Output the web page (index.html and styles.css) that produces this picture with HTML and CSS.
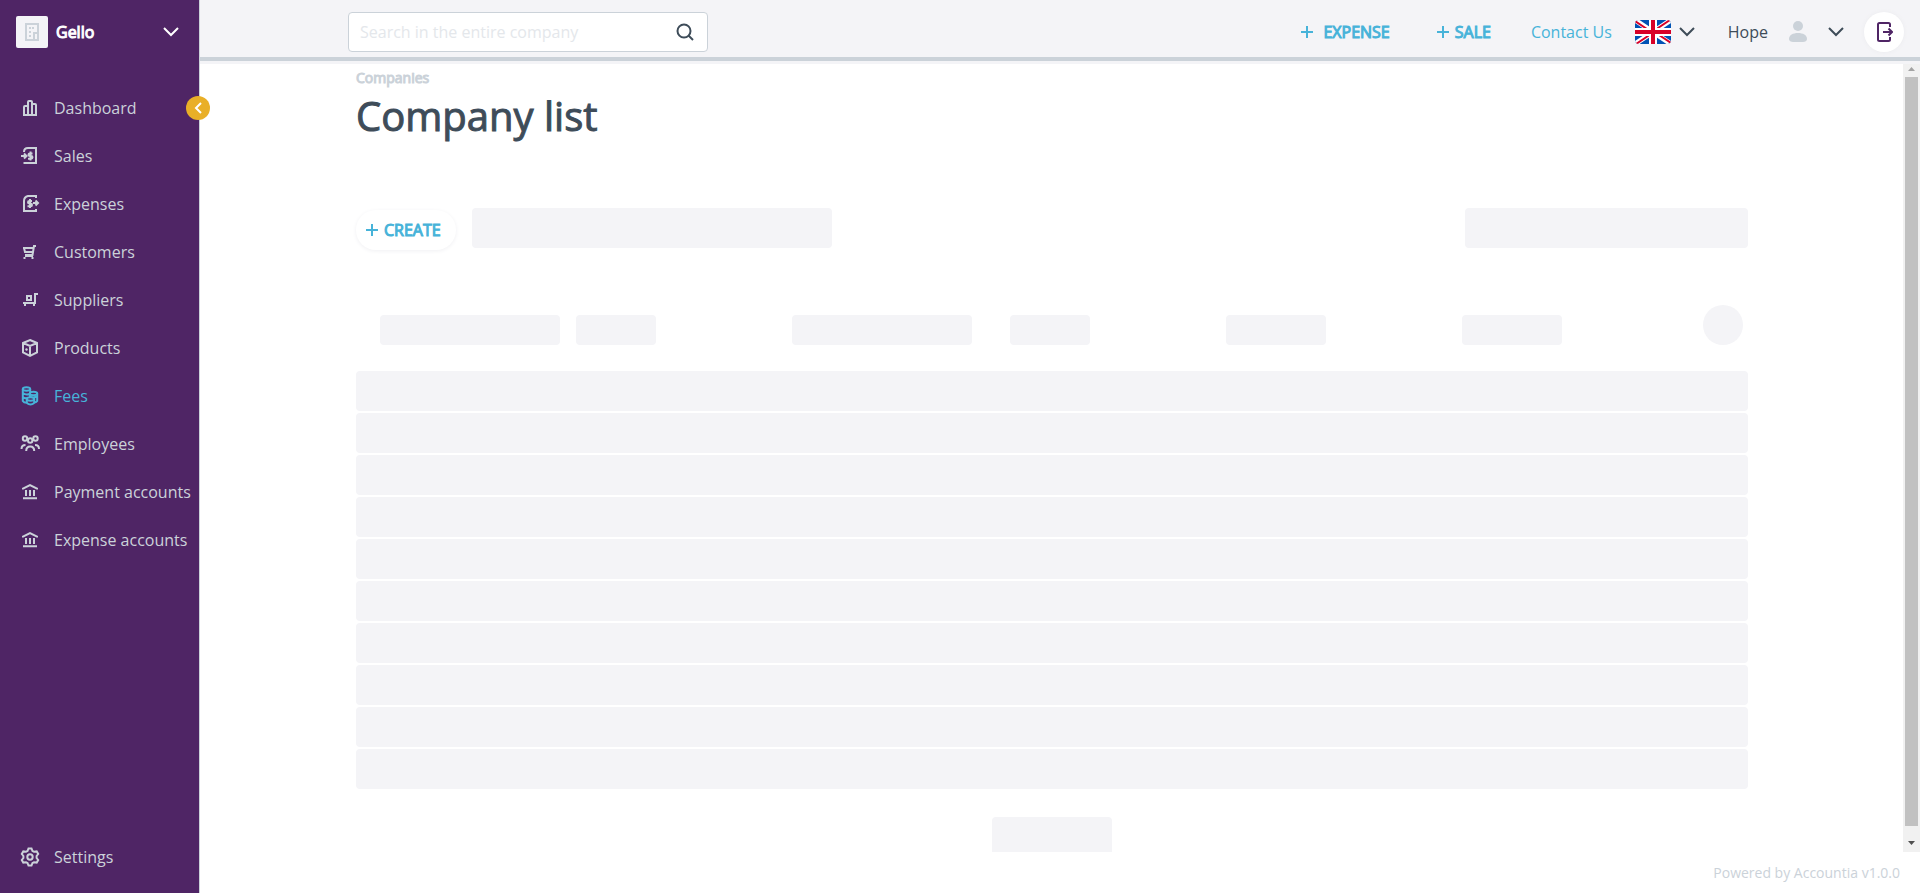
FILE: index.html
```html
<!DOCTYPE html>
<html lang="en">
<head>
<meta charset="utf-8">
<title>Company list</title>
<meta name="viewport" content="width=device-width, initial-scale=1">
<link rel="stylesheet" href="styles.css">
</head>
<body class="app">
<aside class="sidebar">
  <button class="company" type="button">
    <span class="company-logo"><svg width="18" height="20" viewBox="0 0 18 20"><path d="M3 2h12v16H3zM11 18v-7h4"/><path d="M6 6h2M9 6h2M6 10h2M6 14h2"/></svg></span>
    <span class="company-name">Gello</span>
    <svg class="chevron" width="16" height="10" viewBox="0 0 16 10"><path d="M1 1l7 7 7-7"/></svg>
  </button>
  <nav class="menu" aria-label="Main">
    <a class="menu-item" href="#"><svg class="icon" viewBox="0 0 20 20"><path d="M4 17V9q0-1 1-1h3M8 17V4q0-1 1-1h2q1 0 1 1v13M12 6h3q1 0 1 1v10M3 17h14"/></svg>Dashboard</a>
    <a class="menu-item" href="#"><svg class="icon" viewBox="0 0 20 20"><path d="M4 6q0-4 4-4h8v15H3.500M1 10h5M4 7.500L6.500 10 4 12.500"/><path d="M12.500 7.500H10q-1.500 0-1.500 1.300T10 10h1q1.500 0 1.500 1.300T11 12.700H8M10.500 5.500v9"/></svg>Sales</a>
    <a class="menu-item" href="#"><svg class="icon" viewBox="0 0 20 20"><path d="M16 4V2H8Q4 3 4 7v10h12v-2M13 9h5M15.500 6.500L18 9l-2.500 2.500"/><path d="M12 7H9.500Q8 7 8 8.300t1.500 1.300h1q1.500 0 1.500 1.300t-1.500 1.300H7.500M10 5v9"/></svg>Expenses</a>
    <a class="menu-item" href="#"><svg class="icon" viewBox="0 0 20 20"><path d="M16 4h-2l-1.500 9H5M3 6h10M4 6l1 4h8"/><path d="M4.500 15v2M12.500 15v2M5 14h8"/></svg>Customers</a>
    <a class="menu-item" href="#"><svg class="icon" viewBox="0 0 20 20"><path d="M18 4h-3v9H3M7 6h4v4H7zM5 14v2M14 14v2"/></svg>Suppliers</a>
    <a class="menu-item" href="#"><svg class="icon" viewBox="0 0 20 20"><path d="M10 2l7 3v9.500L10 18l-7-3.500V5zM3 5l7 3 7-3M10 8v10M5.500 11l2 1"/></svg>Products</a>
    <a class="menu-item active" href="#"><svg class="icon" viewBox="0 0 20 20"><ellipse cx="6.500" cy="3" rx="3.700" ry="1.700"/><ellipse cx="13.500" cy="7.500" rx="3.700" ry="1.700"/><ellipse cx="10.500" cy="13" rx="3.700" ry="1.700"/><path d="M2.800 3v12q1 1.700 4 1.700M10.200 3v4M2.800 7q3 2.500 7 1M2.800 11q2 1.800 5 1M17.200 7.500V15q-1 1.500-3 1.500M10 8v3M10 10.500q3 1.800 7 0M6.800 13v4q3.700 3 7.400 0v-4"/></svg>Fees</a>
    <a class="menu-item" href="#"><svg class="icon" viewBox="0 0 20 20"><circle cx="5" cy="4.500" r="2.200"/><circle cx="15.500" cy="4.500" r="2.200"/><circle cx="10.200" cy="6.500" r="2.200"/><path d="M1.500 15q0-4 4-4M19 15q0-4-4-4M6.200 17q0-4.500 4-4.500t4 4.500"/></svg>Employees</a>
    <a class="menu-item" href="#"><svg class="icon" viewBox="0 0 20 20"><path d="M3 7.500V6.500L10 3l7 3.500v1M3 16.200h14M6 8v6M10 8v6M14 8v6"/></svg>Payment accounts</a>
    <a class="menu-item" href="#"><svg class="icon" viewBox="0 0 20 20"><path d="M3 7.500V6.500L10 3l7 3.500v1M3 16.200h14M6 8v6M10 8v6M14 8v6"/></svg>Expense accounts</a>
  </nav>
  <a class="menu-item settings" href="#"><svg class="icon" viewBox="0 0 20 20"><circle cx="10" cy="10" r="2.700"/><path d="M8.500 1.500h3l1 2.500 1.500.8 2.700-.4 1.500 2.600L16.600 9v2l1.600 2-1.500 2.600-2.700-.4-1.500.8-1 2.500h-3l-1-2.500-1.500-.8-2.700.4L1.800 13l1.600-2V9L1.800 7l1.500-2.600 2.700.4L7.500 4z"/></svg>Settings</a>
  <button class="collapse" type="button" aria-label="Collapse menu"><svg width="8" height="12" viewBox="0 0 8 12"><path d="M7 1L2 6l5 5"/></svg></button>
</aside>
<div class="page">
  <header class="topbar">
    <form class="search">
      <input class="search-input" type="search" aria-label="Search" placeholder="Search in the entire company">
      <button class="search-button" type="button" aria-label="Search"><svg width="18" height="18" viewBox="0 0 18 18"><circle cx="8" cy="8" r="6.500"/><path d="M12.500 12.500L17 17"/></svg></button>
    </form>
    <div class="tools">
      <a class="quick expense" href="#"><svg class="plus" viewBox="0 0 12 12"><path d="M6 0v12M0 6h12"/></svg>EXPENSE</a>
      <a class="quick sale" href="#"><svg class="plus" viewBox="0 0 12 12"><path d="M6 0v12M0 6h12"/></svg>SALE</a>
      <a class="contact" href="#">Contact Us</a>
      <button class="picker" type="button" aria-label="Language">
        <svg class="flag" width="36" height="24" viewBox="0 0 36 24"><path fill="#0052b4" stroke="none" d="M0 0h36v24H0z"/><path stroke="#fff" stroke-width="5" d="M0 0l36 24M36 0L0 24"/><path stroke="#d80027" stroke-width="2" d="M0 1l15 10M36 23L21 13M35 0L20 10M1 24l15-10"/><path stroke="#fff" stroke-width="8" d="M18 0v24M0 12h36"/><path stroke="#d80027" stroke-width="4" d="M18 0v24M0 12h36"/></svg>
        <svg class="chevron" width="16" height="10" viewBox="0 0 16 10"><path d="M1 1l7 7 7-7"/></svg>
      </button>
      <button class="user" type="button">Hope
        <svg class="avatar" width="18" height="22" viewBox="0 0 18 22"><circle cx="9" cy="5" r="5"/><path d="M0 18c0-4 4-6 9-6s9 2 9 6c0 2-2 3-4 3H4c-2 0-4-1-4-3z"/></svg>
        <svg class="chevron" width="16" height="10" viewBox="0 0 16 10"><path d="M1 1l7 7 7-7"/></svg>
      </button>
      <button class="logout" type="button" aria-label="Log out"><svg width="18" height="20" viewBox="0 0 18 20"><path d="M15 5V2.500Q15 1 13.500 1h-9Q3 1 3 2.500v15Q3 19 4.500 19h9q1.500 0 1.500-1.500V15M8 10h9M13.500 6.500L17 10l-3.500 3.500"/></svg></button>
    </div>
  </header>
  <div class="body">
    <main class="content">
      <p class="crumb">Companies</p>
      <h1 class="title">Company list</h1>
      <div class="actions">
        <button class="create" type="button"><svg class="plus" viewBox="0 0 12 12"><path d="M6 0v12M0 6h12"/></svg>CREATE</button>
        <span class="bone filter"></span>
        <span class="bone pager"></span>
      </div>
      <div class="heads">
        <div class="head"><span class="bone wide"></span><span class="bone small"></span></div>
        <div class="head"><span class="bone wide"></span></div>
        <div class="head"><span class="bone small"></span></div>
        <div class="head"><span class="bone medium"></span></div>
        <div class="head"><span class="bone medium"></span></div>
        <span class="bone round"></span>
      </div>
      <div class="rows">
        <span class="bone row"></span><span class="bone row"></span><span class="bone row"></span><span class="bone row"></span><span class="bone row"></span>
        <span class="bone row"></span><span class="bone row"></span><span class="bone row"></span><span class="bone row"></span><span class="bone row"></span>
      </div>
      <span class="bone more"></span>
    </main>
    <div class="scrollbar" aria-hidden="true">
      <svg class="arrow up" viewBox="0 0 7 4"><path d="M0 4l3.500-4L7 4z"/></svg>
      <span class="thumb"></span>
      <svg class="arrow down" viewBox="0 0 7 4"><path d="M0 0l3.500 4L7 0z"/></svg>
    </div>
  </div>
  <footer class="footer">Powered by Accountia v1.0.0</footer>
</div>
</body>
</html>
```
FILE: styles.css
```css
* { box-sizing: border-box; }

.app {
  margin: 0;
  height: 100vh;
  display: flex;
  overflow: hidden;
  background: #fff;
  color: #3e4c59;
  font: 16px/24px "Open Sans", "Noto Sans", sans-serif;
}

button {
  margin: 0;
  padding: 0;
  border: 0;
  background: none;
  color: inherit;
  font: inherit;
  cursor: pointer;
}

a { color: #47b3d9; text-decoration: none; }
svg { flex: none; fill: none; stroke: currentColor; stroke-width: 2; }

.sidebar {
  position: relative;
  flex: none;
  width: 200px;
  display: flex;
  flex-direction: column;
  background: #4f2565;
  border-right: 1px solid #cbd2d9;
  color: #cbd2d9;
}

.company {
  display: flex;
  align-items: center;
  gap: 8px;
  padding: 16px 20px 16px 16px;
  color: #fff;
}

.company-logo {
  width: 32px;
  height: 32px;
  display: flex;
  align-items: center;
  justify-content: center;
  border-radius: 2px;
  background: #f4f4f7;
  color: #cbd2d9;
}

.company-name { flex: 1; text-align: left; -webkit-text-stroke: 1px; }

.menu { padding-top: 20px; }

.menu-item {
  display: flex;
  align-items: center;
  gap: 14px;
  height: 48px;
  padding-left: 20px;
  color: #cbd2d9;
  white-space: nowrap;
}

.menu-item.active { color: #47b3d9; }
.icon { width: 20px; height: 20px; }
.settings { margin-top: auto; margin-bottom: 12px; }

.collapse {
  position: absolute;
  top: 96px;
  right: -11px;
  width: 24px;
  height: 24px;
  display: flex;
  align-items: center;
  justify-content: center;
  border-radius: 50%;
  background: #e9af27;
  color: #fff;
}

.page { flex: 1; min-width: 0; display: flex; flex-direction: column; }

.topbar {
  flex: none;
  height: 61px;
  display: flex;
  align-items: center;
  justify-content: space-between;
  padding: 7px 16px 0 148px;
  border-bottom: 4px solid #cbd2d9;
  background: #f4f4f7;
}

.search {
  width: 360px;
  height: 40px;
  display: flex;
  align-items: center;
  padding-right: 13px;
  border: 1px solid #cbd2d9;
  border-radius: 4px;
  background: #fff;
}

.search-input {
  flex: 1;
  min-width: 0;
  padding: 0 0 0 11px;
  border: 0;
  outline: 0;
  background: none;
  color: #3e4c59;
  font: inherit;
}

.search-input::placeholder { color: #e4e7eb; opacity: 1; }
.search-button { display: flex; }
.tools { display: flex; align-items: center; }
.quick { display: flex; align-items: center; -webkit-text-stroke: 1px; }
.plus { width: 12px; height: 12px; }
.expense { gap: 10px; margin-right: 47px; }
.sale { gap: 6px; margin-right: 40px; }
.contact { margin-right: 23px; }
.picker { display: flex; align-items: center; gap: 8px; margin-right: 33px; }
.flag { border-radius: 4px; }
.user { display: flex; align-items: center; gap: 21px; margin-right: 20px; }
.avatar { fill: #cbd2d9; stroke: none; }

.logout {
  width: 40px;
  height: 40px;
  display: flex;
  align-items: center;
  justify-content: center;
  border-radius: 50%;
  background: #fff;
  box-shadow: 0 0 4px #ebebee;
  color: #4f2565;
}

.body { flex: 1; min-height: 0; display: flex; border-top: 3px solid #f4f4f7; }

.content { flex: 1; min-width: 0; overflow: hidden; padding: 0 155px 0 156px; }

.crumb { margin: 0; padding-top: 4px; font-size: 14px; line-height: 20px; color: #cbd2d9; -webkit-text-stroke: 1px; }
.title { margin: 0; font-size: 40px; line-height: 56px; font-weight: 400; -webkit-text-stroke: 1px; }

.actions { display: flex; gap: 16px; margin-top: 64px; }

.create {
  width: 100px;
  height: 40px;
  display: flex;
  align-items: center;
  gap: 6px;
  margin-top: 2px;
  padding-left: 10px;
  border-radius: 20px;
  box-shadow: 0 1px 4px #f0f0f3;
  color: #47b3d9;
  -webkit-text-stroke: 1px;
}

.bone { display: block; flex: none; border-radius: 4px; background: #f4f4f7; }
.filter { width: 360px; height: 40px; }
.pager { width: 283px; height: 40px; margin-left: auto; }

.heads {
  display: grid;
  grid-template-columns: 412fr 218fr 216fr 236fr 265fr 40px;
  align-items: end;
  margin-top: 55px;
  padding-right: 5px;
}

.head { display: flex; gap: 16px; padding-left: 24px; }
.head .bone { height: 30px; }
.wide { width: 180px; }
.medium { width: 100px; }
.small { width: 80px; }
.round { width: 40px; height: 40px; border-radius: 50%; }

.rows { display: grid; gap: 2px; margin-top: 26px; }
.row { height: 40px; }
.more { width: 120px; height: 40px; margin: 28px auto 0; }

.scrollbar {
  flex: none;
  width: 17px;
  display: flex;
  flex-direction: column;
  align-items: center;
  background: #f1f1f1;
}

.arrow { width: 7px; height: 4px; margin: 3px 0 6px; stroke: none; fill: #a3a3a3; }
.down { margin: 15px 0 7px; fill: #505050; }
.thumb { width: 13px; flex: 1; background: #c1c1c1; }

.footer {
  flex: none;
  height: 41px;
  padding: 11px 20px 0;
  text-align: right;
  font-size: 14px;
  line-height: 20px;
  color: #cbd2d9;
}
```
